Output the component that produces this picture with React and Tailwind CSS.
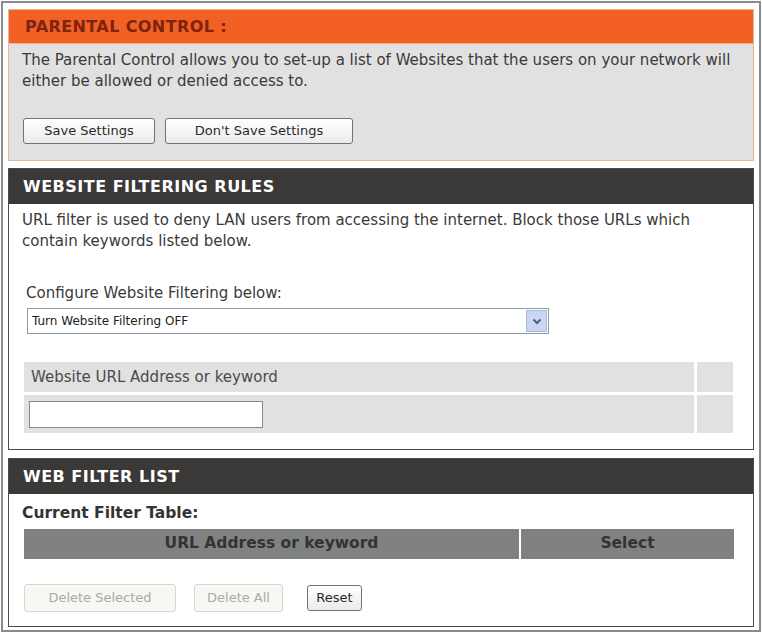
function Btn({ children, disabled, className = '' }) {
  return (
    <button
      className={`h-[26px] rounded-[3px] border text-[13px] ${
        disabled
          ? 'border-[#d8d8ce] bg-[#f7f7f3] text-[#aaaaa2]'
          : 'border-[#6f7378] bg-gradient-to-b from-white to-[#ebebeb] text-[#2a2a2a]'
      } ${className}`}
    >
      {children}
    </button>
  );
}

export default function App() {
  return (
    <div className="w-[762px] h-[637px] bg-white p-[1px]" style={{ fontFamily: '"DejaVu Sans", Verdana, sans-serif' }}>
      <div className="border-2 border-[#8a8a8a] h-[631px] px-[5px] pt-[6px] flex flex-col">
        {/* parental control */}
        <div className="border border-[#e3b49e]">
          <div className="h-[33px] bg-[#f26024] flex items-center px-[16px]">
            <span className="text-[16px] font-bold text-[#7d2410] tracking-[0.4px]">PARENTAL CONTROL :</span>
          </div>
          <div className="bg-[#e1e1e1] px-[13px] pt-[6px] pb-[16px] border-t border-[#f3b090]">
            <p className="text-[15px] leading-[21px] text-[#3a3a3a]">
              The Parental Control allows you to set-up a list of Websites that the users on your network will either be allowed or denied access to.
            </p>
            <div className="flex gap-[10px] mt-[26px] ml-[1px]">
              <Btn className="w-[132px]">Save Settings</Btn>
              <Btn className="w-[188px]">Don't Save Settings</Btn>
            </div>
          </div>
        </div>

        {/* website filtering rules */}
        <div className="mt-[7px] border border-[#4a4a4a]">
          <div className="h-[35px] bg-[#3b3838] flex items-center px-[14px]">
            <span className="text-[16px] font-bold text-white tracking-[0.5px]">WEBSITE FILTERING RULES</span>
          </div>
          <div className="px-[13px] pt-[6px] pb-[16px]">
            <p className="text-[15px] leading-[21px] text-[#3a3a3a] pr-[30px]">
              URL filter is used to deny LAN users from accessing the internet. Block those URLs which contain keywords listed below.
            </p>
            <p className="mt-[31px] ml-[4px] text-[15px] leading-[21px] text-[#3a3a3a]">Configure Website Filtering below:</p>
            <div className="mt-[4px] ml-[5px] w-[522px] h-[26px] border border-[#8e9aa8] bg-white flex items-center justify-between pl-[4px] pr-[1px]">
              <span className="text-[12px] text-[#222]">Turn Website Filtering OFF</span>
              <span className="w-[21px] h-[22px] bg-[#cbd6f2] border border-[#a9b8dd] flex items-center justify-center">
                <svg width="10" height="7" viewBox="0 0 10 7">
                  <path d="M1.5 1.5 L5 5 L8.5 1.5" stroke="#4d5f8a" strokeWidth="2" fill="none" />
                </svg>
              </span>
            </div>
            <div className="mt-[28px] ml-[2px] w-[709px] flex flex-col gap-[3px]">
              <div className="flex gap-[3px] h-[30px]">
                <div className="flex-1 bg-[#e1e1e1] flex items-center px-[7px] text-[15px] text-[#4a4a4a]">
                  Website URL Address or keyword
                </div>
                <div className="w-[36px] bg-[#e1e1e1]" />
              </div>
              <div className="flex gap-[3px] h-[38px]">
                <div className="flex-1 bg-[#e1e1e1] flex items-center px-[5px]">
                  <div className="w-[234px] h-[27px] bg-white border border-[#8a8a8a]" />
                </div>
                <div className="w-[36px] bg-[#e1e1e1]" />
              </div>
            </div>
          </div>
        </div>

        {/* web filter list */}
        <div className="mt-[8px] border border-[#4a4a4a]">
          <div className="h-[35px] bg-[#3b3838] flex items-center px-[14px]">
            <span className="text-[16px] font-bold text-white tracking-[0.5px]">WEB FILTER LIST</span>
          </div>
          <div className="px-[13px] pt-[9px] pb-[14px]">
            <p className="text-[15.5px] leading-[20px] font-bold text-[#333]">Current Filter Table:</p>
            <div className="mt-[6px] ml-[2px] w-[710px] h-[30px] flex gap-[2px] text-[15.5px] font-bold text-[#333]">
              <div className="w-[495px] bg-[#808282] flex items-center justify-center">URL Address or keyword</div>
              <div className="flex-1 bg-[#808282] flex items-center justify-center">Select</div>
            </div>
            <div className="flex items-center mt-[25px] ml-[2px]">
              <Btn disabled className="w-[152px] h-[28px]">Delete Selected</Btn>
              <Btn disabled className="w-[89px] h-[28px] ml-[18px]">Delete All</Btn>
              <Btn className="w-[55px] h-[25px] ml-[24px] border-[#4a4e55]">Reset</Btn>
            </div>
          </div>
        </div>
      </div>
    </div>
  );
}
